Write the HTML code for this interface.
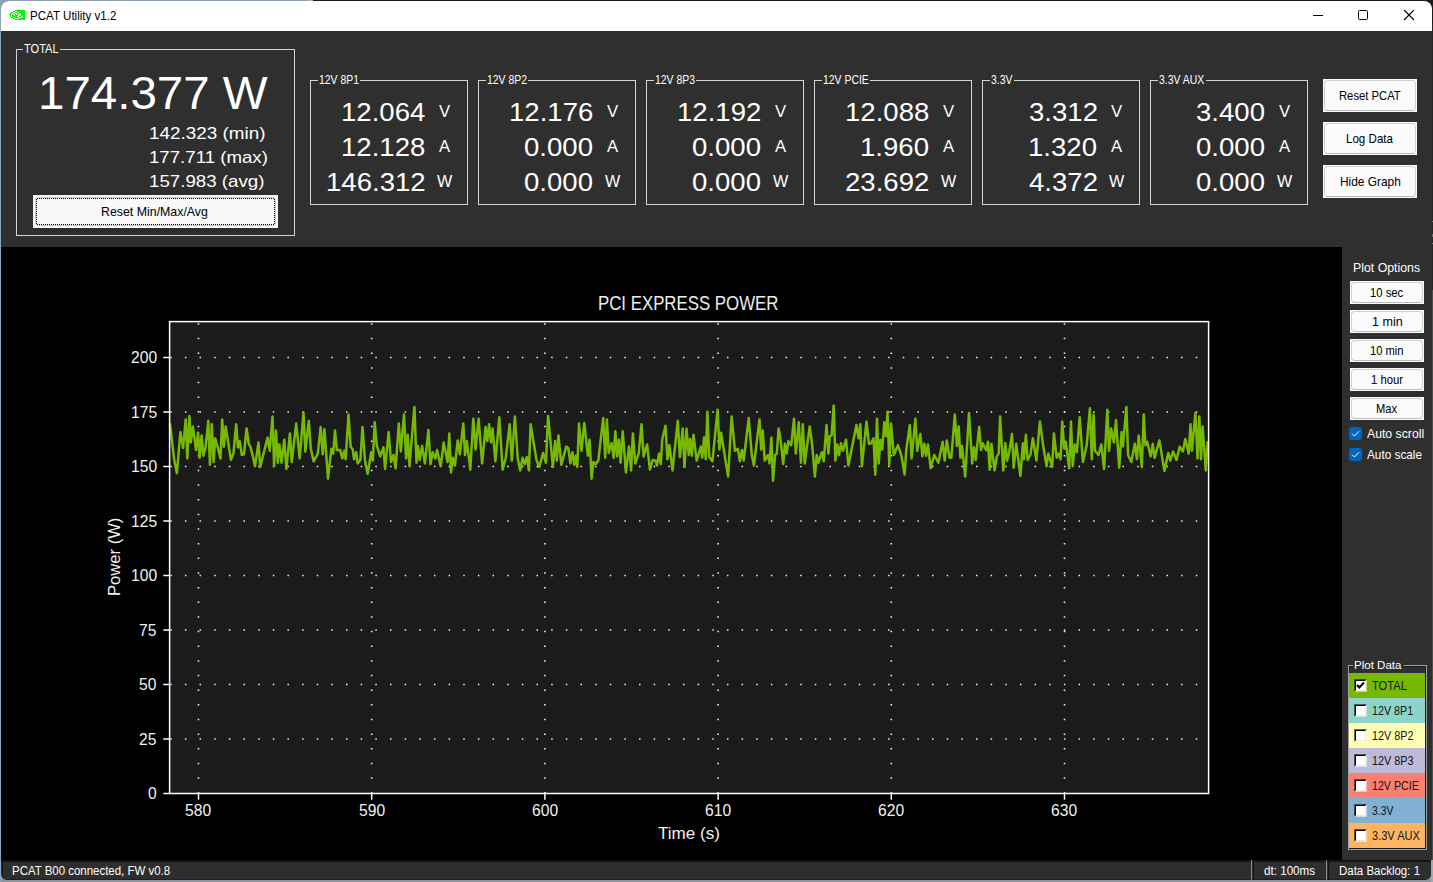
<!DOCTYPE html>
<html><head><meta charset="utf-8"><style>
html,body{margin:0;padding:0;}
body{width:1433px;height:882px;position:relative;overflow:hidden;background:#8da2b8;font-family:'Liberation Sans', sans-serif;}
.t{position:absolute;white-space:pre;transform-origin:0 0;font-family:'Liberation Sans', sans-serif;}
</style></head><body>
<div style="position:absolute;left:0px;top:0px;width:307px;height:1px;background:#8a9db1"></div>
<div style="position:absolute;left:307px;top:0px;width:6px;height:1px;background:#b0b4b8"></div>
<div style="position:absolute;left:313px;top:0px;width:1120px;height:1px;background:#1c1c1c"></div>
<div style="position:absolute;left:1432px;top:0px;width:1px;height:860px;background:#262626"></div>
<div style="position:absolute;left:1412px;top:0px;width:21px;height:24px;background:#1c1c1c"></div>
<div style="position:absolute;left:0px;top:0px;width:1px;height:882px;background:#8fa3b9"></div>
<div style="position:absolute;left:1px;top:1px;width:1431px;height:879px;border-radius:8px;overflow:hidden;background:#2f2f2f">
<div style="position:absolute;left:0;top:0;width:1431px;height:30px;background:#fff"></div>
</div>
<svg style="position:absolute;left:0;top:0" width="30" height="30" viewBox="0 0 30 30" shape-rendering="crispEdges" fill="#00ff00"><rect x="15" y="10" width="10" height="1"/><rect x="13" y="11" width="2" height="1"/><rect x="17" y="11" width="8" height="1"/><rect x="11" y="12" width="2" height="1"/><rect x="15" y="12" width="2" height="1"/><rect x="19" y="12" width="6" height="1"/><rect x="10" y="13" width="2" height="1"/><rect x="13" y="13" width="2" height="1"/><rect x="17" y="13" width="2" height="1"/><rect x="21" y="13" width="4" height="1"/><rect x="9" y="14" width="2" height="1"/><rect x="12" y="14" width="1" height="1"/><rect x="15" y="14" width="1" height="1"/><rect x="18" y="14" width="1" height="1"/><rect x="21" y="14" width="4" height="1"/><rect x="10" y="15" width="1" height="1"/><rect x="12" y="15" width="2" height="1"/><rect x="15" y="15" width="3" height="1"/><rect x="19" y="15" width="1" height="1"/><rect x="21" y="15" width="4" height="1"/><rect x="10" y="16" width="1" height="1"/><rect x="12" y="16" width="5" height="1"/><rect x="19" y="16" width="2" height="1"/><rect x="23" y="16" width="2" height="1"/><rect x="11" y="17" width="2" height="1"/><rect x="15" y="17" width="4" height="1"/><rect x="22" y="17" width="3" height="1"/><rect x="13" y="18" width="2" height="1"/><rect x="19" y="18" width="6" height="1"/><rect x="15" y="19" width="10" height="1"/></svg>
<div class="t" style="left:29.94px;top:9.84px;font-size:12px;line-height:12px;color:#000;transform:scaleX(0.9649);">PCAT Utility v1.2</div>
<div style="position:absolute;left:1313px;top:15px;width:10px;height:1px;background:#000"></div>
<div style="position:absolute;left:1358px;top:10px;width:8px;height:8px;border:1px solid #000;border-radius:1.5px"></div>
<svg style="position:absolute;left:1403px;top:9px" width="12" height="12" viewBox="0 0 12 12"><path d="M1 1L11 11M11 1L1 11" stroke="#000" stroke-width="1.1"/></svg>
<div style="position:absolute;left:16px;top:49px;width:279px;height:187px;border:1px solid #d4d4d4;box-sizing:border-box"></div>
<div style="position:absolute;left:23.0px;top:48px;width:37.0px;height:3px;background:#2f2f2f"></div>
<div class="t" style="left:24.25px;top:42.62px;font-size:12.5px;line-height:12.5px;color:#fff;transform:scaleX(0.8846);">TOTAL</div>
<div class="t" style="left:37.64px;top:69.95px;font-size:46px;line-height:46px;color:#fff;transform:scaleX(1.0322);">174.377 W</div>
<div class="t" style="left:148.98px;top:125.11px;font-size:17px;line-height:17px;color:#fff;transform:scaleX(1.1107);">142.323 (min)</div>
<div class="t" style="left:149.00px;top:149.11px;font-size:17px;line-height:17px;color:#fff;transform:scaleX(1.0972);">177.711 (max)</div>
<div class="t" style="left:149.00px;top:173.11px;font-size:17px;line-height:17px;color:#fff;transform:scaleX(1.1009);">157.983 (avg)</div>
<div style="position:absolute;left:33px;top:195px;width:245px;height:33px;background:#f9f9f9"></div>
<div style="position:absolute;left:35px;top:197px;width:241px;height:29px;border:1px solid #c9c9c9;border-radius:4px;box-sizing:border-box"></div>
<svg style="position:absolute;left:0;top:0" width="300" height="240" shape-rendering="crispEdges"><path d="M37 198.5H274M37 224.5H274M36.5 199V224M274.5 199V224" stroke="#000" stroke-width="1" stroke-dasharray="1 1"/></svg>
<div class="t" style="left:101.48px;top:204.79px;font-size:13px;line-height:13px;color:#000;transform:scaleX(0.9506);">Reset Min/Max/Avg</div>
<div style="position:absolute;left:310px;top:80px;width:158px;height:125px;border:1px solid #d4d4d4;box-sizing:border-box"></div>
<div style="position:absolute;left:318.0px;top:79px;width:41.74921875000001px;height:3px;background:#2f2f2f"></div>
<div class="t" style="left:318.72px;top:73.92px;font-size:12.5px;line-height:12.5px;color:#fff;transform:scaleX(0.8350);">12V 8P1</div>
<div class="t" style="left:340.69px;top:99.49px;font-size:26px;line-height:26px;color:#fff;transform:scaleX(1.0600);">12.064</div>
<div class="t" style="left:341.11px;top:134.49px;font-size:26px;line-height:26px;color:#fff;transform:scaleX(1.0600);">12.128</div>
<div class="t" style="left:326.02px;top:169.49px;font-size:26px;line-height:26px;color:#fff;transform:scaleX(1.0600);">146.312</div>
<div class="t" style="left:438.92px;top:103.11px;font-size:17px;line-height:17px;color:#fff;transform:scaleX(0.9841);">V</div>
<div class="t" style="left:438.96px;top:138.11px;font-size:17px;line-height:17px;color:#fff;transform:scaleX(0.9767);">A</div>
<div class="t" style="left:436.87px;top:173.11px;font-size:17px;line-height:17px;color:#fff;transform:scaleX(0.9500);">W</div>
<div style="position:absolute;left:478px;top:80px;width:158px;height:125px;border:1px solid #d4d4d4;box-sizing:border-box"></div>
<div style="position:absolute;left:486.0px;top:79px;width:41.72312499999998px;height:3px;background:#2f2f2f"></div>
<div class="t" style="left:486.72px;top:73.92px;font-size:12.5px;line-height:12.5px;color:#fff;transform:scaleX(0.8350);">12V 8P2</div>
<div class="t" style="left:509.11px;top:99.49px;font-size:26px;line-height:26px;color:#fff;transform:scaleX(1.0600);">12.176</div>
<div class="t" style="left:524.26px;top:134.49px;font-size:26px;line-height:26px;color:#fff;transform:scaleX(1.0600);">0.000</div>
<div class="t" style="left:524.26px;top:169.49px;font-size:26px;line-height:26px;color:#fff;transform:scaleX(1.0600);">0.000</div>
<div class="t" style="left:606.92px;top:103.11px;font-size:17px;line-height:17px;color:#fff;transform:scaleX(0.9841);">V</div>
<div class="t" style="left:606.96px;top:138.11px;font-size:17px;line-height:17px;color:#fff;transform:scaleX(0.9767);">A</div>
<div class="t" style="left:604.87px;top:173.11px;font-size:17px;line-height:17px;color:#fff;transform:scaleX(0.9500);">W</div>
<div style="position:absolute;left:646px;top:80px;width:158px;height:125px;border:1px solid #d4d4d4;box-sizing:border-box"></div>
<div style="position:absolute;left:654.0px;top:79px;width:41.801406250000014px;height:3px;background:#2f2f2f"></div>
<div class="t" style="left:654.72px;top:73.92px;font-size:12.5px;line-height:12.5px;color:#fff;transform:scaleX(0.8350);">12V 8P3</div>
<div class="t" style="left:677.31px;top:99.49px;font-size:26px;line-height:26px;color:#fff;transform:scaleX(1.0600);">12.192</div>
<div class="t" style="left:692.26px;top:134.49px;font-size:26px;line-height:26px;color:#fff;transform:scaleX(1.0600);">0.000</div>
<div class="t" style="left:692.26px;top:169.49px;font-size:26px;line-height:26px;color:#fff;transform:scaleX(1.0600);">0.000</div>
<div class="t" style="left:774.92px;top:103.11px;font-size:17px;line-height:17px;color:#fff;transform:scaleX(0.9841);">V</div>
<div class="t" style="left:774.96px;top:138.11px;font-size:17px;line-height:17px;color:#fff;transform:scaleX(0.9767);">A</div>
<div class="t" style="left:772.87px;top:173.11px;font-size:17px;line-height:17px;color:#fff;transform:scaleX(0.9500);">W</div>
<div style="position:absolute;left:814px;top:80px;width:158px;height:125px;border:1px solid #d4d4d4;box-sizing:border-box"></div>
<div style="position:absolute;left:822.0px;top:79px;width:47.620312499999955px;height:3px;background:#2f2f2f"></div>
<div class="t" style="left:822.72px;top:73.92px;font-size:12.5px;line-height:12.5px;color:#fff;transform:scaleX(0.8350);">12V PCIE</div>
<div class="t" style="left:845.11px;top:99.49px;font-size:26px;line-height:26px;color:#fff;transform:scaleX(1.0600);">12.088</div>
<div class="t" style="left:860.26px;top:134.49px;font-size:26px;line-height:26px;color:#fff;transform:scaleX(1.0600);">1.960</div>
<div class="t" style="left:845.31px;top:169.49px;font-size:26px;line-height:26px;color:#fff;transform:scaleX(1.0600);">23.692</div>
<div class="t" style="left:942.92px;top:103.11px;font-size:17px;line-height:17px;color:#fff;transform:scaleX(0.9841);">V</div>
<div class="t" style="left:942.96px;top:138.11px;font-size:17px;line-height:17px;color:#fff;transform:scaleX(0.9767);">A</div>
<div class="t" style="left:940.87px;top:173.11px;font-size:17px;line-height:17px;color:#fff;transform:scaleX(0.9500);">W</div>
<div style="position:absolute;left:982px;top:80px;width:158px;height:125px;border:1px solid #d4d4d4;box-sizing:border-box"></div>
<div style="position:absolute;left:990.0px;top:79px;width:24.03156249999995px;height:3px;background:#2f2f2f"></div>
<div class="t" style="left:991.11px;top:73.92px;font-size:12.5px;line-height:12.5px;color:#fff;transform:scaleX(0.8350);">3.3V</div>
<div class="t" style="left:1028.61px;top:99.49px;font-size:26px;line-height:26px;color:#fff;transform:scaleX(1.0600);">3.312</div>
<div class="t" style="left:1028.26px;top:134.49px;font-size:26px;line-height:26px;color:#fff;transform:scaleX(1.0600);">1.320</div>
<div class="t" style="left:1028.61px;top:169.49px;font-size:26px;line-height:26px;color:#fff;transform:scaleX(1.0600);">4.372</div>
<div class="t" style="left:1110.92px;top:103.11px;font-size:17px;line-height:17px;color:#fff;transform:scaleX(0.9841);">V</div>
<div class="t" style="left:1110.96px;top:138.11px;font-size:17px;line-height:17px;color:#fff;transform:scaleX(0.9767);">A</div>
<div class="t" style="left:1108.87px;top:173.11px;font-size:17px;line-height:17px;color:#fff;transform:scaleX(0.9500);">W</div>
<div style="position:absolute;left:1150px;top:80px;width:158px;height:125px;border:1px solid #d4d4d4;box-sizing:border-box"></div>
<div style="position:absolute;left:1158.0px;top:79px;width:47.64640624999993px;height:3px;background:#2f2f2f"></div>
<div class="t" style="left:1159.11px;top:73.92px;font-size:12.5px;line-height:12.5px;color:#fff;transform:scaleX(0.8350);">3.3V AUX</div>
<div class="t" style="left:1196.26px;top:99.49px;font-size:26px;line-height:26px;color:#fff;transform:scaleX(1.0600);">3.400</div>
<div class="t" style="left:1196.26px;top:134.49px;font-size:26px;line-height:26px;color:#fff;transform:scaleX(1.0600);">0.000</div>
<div class="t" style="left:1196.26px;top:169.49px;font-size:26px;line-height:26px;color:#fff;transform:scaleX(1.0600);">0.000</div>
<div class="t" style="left:1278.92px;top:103.11px;font-size:17px;line-height:17px;color:#fff;transform:scaleX(0.9841);">V</div>
<div class="t" style="left:1278.96px;top:138.11px;font-size:17px;line-height:17px;color:#fff;transform:scaleX(0.9767);">A</div>
<div class="t" style="left:1276.87px;top:173.11px;font-size:17px;line-height:17px;color:#fff;transform:scaleX(0.9500);">W</div>
<div style="position:absolute;left:1323px;top:79px;width:94px;height:33px;background:#fbfbfb"></div>
<div style="position:absolute;left:1324px;top:80px;width:92px;height:31px;border:1px solid #d0d0d0;border-bottom-color:#b8b8b8;border-radius:4px;box-sizing:border-box;background:#fbfbfb"></div>
<div class="t" style="left:1338.82px;top:89.49px;font-size:13px;line-height:13px;color:#000;transform:scaleX(0.8654);">Reset PCAT</div>
<div style="position:absolute;left:1323px;top:122px;width:94px;height:33px;background:#fbfbfb"></div>
<div style="position:absolute;left:1324px;top:123px;width:92px;height:31px;border:1px solid #d0d0d0;border-bottom-color:#b8b8b8;border-radius:4px;box-sizing:border-box;background:#fbfbfb"></div>
<div class="t" style="left:1346.05px;top:132.49px;font-size:13px;line-height:13px;color:#000;transform:scaleX(0.8902);">Log Data</div>
<div style="position:absolute;left:1323px;top:165px;width:94px;height:33px;background:#fbfbfb"></div>
<div style="position:absolute;left:1324px;top:166px;width:92px;height:31px;border:1px solid #d0d0d0;border-bottom-color:#b8b8b8;border-radius:4px;box-sizing:border-box;background:#fbfbfb"></div>
<div class="t" style="left:1339.52px;top:175.49px;font-size:13px;line-height:13px;color:#000;transform:scaleX(0.9141);">Hide Graph</div>
<div style="position:absolute;left:1px;top:247px;width:1341px;height:613px;background:#000"></div>
<svg style="position:absolute;left:0;top:0" width="1433" height="882" viewBox="0 0 1433 882"><rect x="169.6" y="321.6" width="1039.0" height="471.9" fill="#1b1b1b"/><path d="M170.25 739.00H1208.6" stroke="#f0f0f0" stroke-width="1.6" stroke-dasharray="1.5 13.15"/><path d="M170.25 684.50H1208.6" stroke="#f0f0f0" stroke-width="1.6" stroke-dasharray="1.5 13.15"/><path d="M170.25 630.00H1208.6" stroke="#f0f0f0" stroke-width="1.6" stroke-dasharray="1.5 13.15"/><path d="M170.25 575.50H1208.6" stroke="#f0f0f0" stroke-width="1.6" stroke-dasharray="1.5 13.15"/><path d="M170.25 521.00H1208.6" stroke="#f0f0f0" stroke-width="1.6" stroke-dasharray="1.5 13.15"/><path d="M170.25 466.50H1208.6" stroke="#f0f0f0" stroke-width="1.6" stroke-dasharray="1.5 13.15"/><path d="M170.25 412.00H1208.6" stroke="#f0f0f0" stroke-width="1.6" stroke-dasharray="1.5 13.15"/><path d="M170.25 357.50H1208.6" stroke="#f0f0f0" stroke-width="1.6" stroke-dasharray="1.5 13.15"/><path d="M198.50 793.5V321.6" stroke="#f0f0f0" stroke-width="1.6" stroke-dasharray="1.5 13.15"/><path d="M371.70 793.5V321.6" stroke="#f0f0f0" stroke-width="1.6" stroke-dasharray="1.5 13.15"/><path d="M544.90 793.5V321.6" stroke="#f0f0f0" stroke-width="1.6" stroke-dasharray="1.5 13.15"/><path d="M718.10 793.5V321.6" stroke="#f0f0f0" stroke-width="1.6" stroke-dasharray="1.5 13.15"/><path d="M891.30 793.5V321.6" stroke="#f0f0f0" stroke-width="1.6" stroke-dasharray="1.5 13.15"/><path d="M1064.50 793.5V321.6" stroke="#f0f0f0" stroke-width="1.6" stroke-dasharray="1.5 13.15"/><path d="M169.9 422.9 L174.1 459.2 L176.9 473.2 L180.4 432.0 L183.1 448.0 L185.7 419.4 L187.3 458.5 L189.4 415.9 L190.8 442.5 L192.9 426.4 L196.0 450.1 L198.1 432.7 L199.6 457.8 L201.6 435.5 L203.4 455.7 L205.5 448.0 L208.3 420.8 L209.9 464.8 L211.8 424.3 L213.6 462.0 L215.2 438.3 L217.3 445.9 L220.5 458.5 L222.2 419.4 L223.9 446.6 L225.7 426.4 L230.9 459.9 L233.4 453.6 L236.2 424.3 L237.9 447.3 L239.7 441.1 L241.8 455.0 L243.9 454.3 L246.6 428.5 L248.7 443.8 L250.4 446.6 L252.9 456.4 L255.0 466.2 L258.5 442.5 L260.2 466.9 L267.6 437.6 L269.7 450.8 L272.5 416.6 L274.1 466.2 L276.0 430.6 L277.8 462.7 L279.4 444.5 L281.5 462.7 L284.3 439.7 L286.4 469.0 L289.9 433.4 L291.7 462.0 L296.2 423.6 L299.7 458.5 L303.5 412.4 L305.3 451.5 L308.8 420.8 L310.8 448.7 L313.6 461.3 L317.8 453.6 L320.6 427.1 L322.7 454.3 L324.4 429.2 L328.0 478.7 L331.4 448.7 L333.2 453.6 L335.0 430.6 L336.9 450.1 L340.2 450.1 L342.3 458.5 L344.3 450.8 L345.7 459.2 L348.5 414.5 L350.6 446.6 L352.7 449.4 L354.1 459.2 L356.2 452.2 L357.6 463.4 L360.4 459.9 L362.5 427.1 L364.9 459.9 L367.7 473.9 L371.2 452.2 L372.8 460.6 L374.7 422.2 L376.7 445.2 L380.2 456.4 L383.4 447.3 L385.1 469.0 L388.6 432.0 L391.0 462.0 L393.5 455.0 L395.6 468.3 L398.8 423.6 L400.8 451.5 L404.0 414.5 L406.1 458.5 L407.7 434.8 L409.5 466.2 L414.4 406.9 L416.5 462.7 L417.9 445.9 L419.7 459.9 L422.1 445.9 L424.9 463.4 L428.4 429.9 L430.5 464.1 L432.6 452.2 L435.4 458.5 L437.0 450.1 L440.7 466.2 L443.7 442.5 L447.6 462.0 L449.3 433.4 L451.0 472.5 L452.8 457.8 L454.9 465.5 L457.7 440.4 L459.8 454.3 L463.3 423.6 L465.0 455.0 L466.8 441.1 L470.3 469.7 L473.3 418.7 L475.6 449.4 L478.6 418.7 L482.1 463.4 L485.6 427.1 L487.3 441.1 L489.1 424.3 L490.9 442.5 L492.6 428.5 L495.4 461.3 L499.3 417.3 L502.6 469.7 L505.8 457.8 L509.6 424.3 L511.8 460.6 L514.9 416.6 L517.7 458.5 L520.2 470.4 L522.6 457.8 L524.7 464.1 L526.8 457.1 L528.9 470.4 L530.6 424.3 L536.6 460.6 L539.3 466.9 L543.1 452.9 L545.9 462.7 L548.1 415.9 L552.9 466.9 L555.1 441.1 L556.8 460.6 L558.5 435.5 L561.3 464.8 L566.2 446.6 L568.3 448.0 L570.4 463.4 L572.4 452.2 L574.3 464.8 L575.9 455.7 L577.3 466.9 L579.0 423.6 L581.5 450.8 L584.3 422.9 L587.8 455.7 L589.6 439.7 L591.6 478.7 L593.4 462.0 L595.5 464.1 L598.3 460.6 L603.2 418.0 L605.2 457.8 L606.9 419.4 L608.7 452.9 L611.5 443.2 L613.6 457.8 L615.3 431.3 L617.1 456.4 L618.9 439.7 L620.6 462.7 L622.7 431.3 L625.9 472.5 L629.0 446.6 L631.1 470.4 L632.9 433.4 L635.3 463.4 L638.7 453.6 L641.5 424.3 L643.6 456.4 L647.1 444.5 L649.9 469.7 L652.7 459.9 L655.5 460.6 L656.9 465.5 L659.0 453.6 L660.8 464.1 L662.2 439.7 L665.5 425.7 L667.4 459.2 L669.4 445.2 L672.5 470.4 L677.8 420.8 L679.9 457.1 L682.7 428.5 L684.5 466.9 L686.5 428.5 L688.7 455.0 L690.1 439.0 L691.8 455.7 L693.5 434.8 L696.7 460.6 L700.8 446.6 L702.2 457.8 L704.1 437.6 L705.7 459.2 L707.4 411.7 L709.2 457.1 L712.4 461.3 L717.6 409.7 L719.4 449.4 L721.1 432.7 L728.1 476.6 L731.6 416.6 L735.0 450.8 L737.8 448.7 L739.9 461.3 L742.0 450.1 L743.7 460.6 L748.7 418.0 L751.8 455.0 L753.9 465.5 L759.5 419.4 L761.2 449.4 L762.8 430.6 L764.7 460.6 L768.1 455.0 L769.5 463.4 L771.4 437.6 L773.0 480.8 L775.1 455.0 L776.8 453.6 L778.6 428.5 L780.7 440.4 L783.2 464.1 L784.9 443.8 L786.6 453.6 L788.4 441.1 L791.2 445.2 L794.0 418.7 L795.8 453.6 L798.8 422.2 L800.9 462.7 L802.8 424.3 L804.7 463.4 L809.7 426.4 L812.1 444.5 L814.9 476.6 L816.7 455.0 L818.4 462.7 L821.9 452.2 L823.7 461.3 L826.5 425.0 L828.4 453.6 L829.8 436.2 L831.6 435.5 L833.7 405.5 L835.4 460.6 L837.2 444.5 L839.0 455.0 L841.0 443.2 L842.8 450.8 L846.0 439.7 L848.4 465.5 L856.4 425.0 L858.6 438.3 L860.3 424.3 L861.9 466.2 L866.5 421.5 L868.9 443.8 L871.1 443.2 L873.5 438.3 L875.3 474.6 L877.0 418.7 L878.7 463.4 L880.5 439.7 L882.3 449.4 L884.3 422.2 L886.1 436.2 L887.5 411.7 L889.3 464.8 L891.0 423.6 L893.8 455.0 L897.9 445.2 L901.4 455.7 L904.6 474.6 L906.3 449.4 L909.8 425.0 L911.6 458.5 L915.4 418.7 L917.2 450.8 L920.3 434.1 L922.4 456.4 L924.2 443.8 L926.1 455.7 L927.9 444.5 L930.7 468.3 L934.2 455.0 L938.4 462.7 L942.6 441.8 L944.7 460.6 L946.8 440.4 L949.6 457.8 L951.3 457.8 L954.8 414.5 L956.9 445.9 L958.7 426.4 L960.4 457.8 L962.0 445.9 L965.2 476.6 L969.0 413.1 L972.2 463.4 L974.0 447.3 L975.7 459.9 L979.2 427.1 L981.0 450.1 L982.7 443.2 L986.2 450.1 L988.0 441.8 L989.7 469.7 L991.5 443.8 L994.5 470.4 L996.9 456.4 L998.7 453.6 L1000.1 416.6 L1003.3 470.4 L1005.3 443.2 L1007.1 460.6 L1009.2 452.2 L1012.0 434.1 L1013.7 467.6 L1016.2 443.8 L1020.4 475.9 L1022.9 443.2 L1023.9 459.2 L1025.9 434.8 L1027.6 459.9 L1030.4 455.0 L1032.9 438.3 L1036.4 460.6 L1039.9 421.5 L1043.4 447.3 L1046.6 466.2 L1048.3 453.6 L1052.2 466.9 L1053.9 433.4 L1056.7 457.8 L1058.7 453.6 L1060.6 459.2 L1062.2 421.5 L1064.3 448.7 L1065.7 441.8 L1069.2 468.3 L1071.0 421.5 L1072.7 466.2 L1074.8 444.5 L1076.9 452.2 L1079.7 417.3 L1082.9 462.0 L1086.7 445.2 L1089.9 408.3 L1091.8 459.2 L1093.6 414.5 L1095.0 450.8 L1098.5 455.0 L1101.3 444.5 L1104.1 469.0 L1107.3 409.7 L1109.0 450.8 L1111.1 428.5 L1113.9 442.5 L1116.0 420.1 L1119.2 467.6 L1121.6 432.0 L1122.9 446.6 L1126.4 406.9 L1128.1 455.0 L1131.3 462.0 L1134.8 443.8 L1136.9 459.2 L1138.7 435.5 L1141.8 466.9 L1143.7 414.5 L1145.4 445.2 L1147.2 441.8 L1150.7 456.4 L1152.8 443.8 L1154.6 457.8 L1156.3 451.5 L1159.4 440.4 L1164.4 471.1 L1168.2 452.9 L1170.3 460.6 L1173.0 451.5 L1176.5 459.9 L1179.7 446.6 L1182.8 451.5 L1185.3 439.0 L1188.7 453.6 L1190.5 424.3 L1191.9 450.8 L1195.4 413.1 L1197.5 458.5 L1199.3 416.6 L1201.0 459.2 L1202.6 426.4 L1205.8 470.4 L1207.7 441.1" stroke="#76b900" stroke-width="2.5" fill="none" stroke-linejoin="round"/><rect x="169.6" y="321.6" width="1039.0" height="471.9" fill="none" stroke="#fff" stroke-width="1.5"/><path d="M163.3 793.50H169.6" stroke="#fff" stroke-width="1.5"/><path d="M163.3 739.00H169.6" stroke="#fff" stroke-width="1.5"/><path d="M163.3 684.50H169.6" stroke="#fff" stroke-width="1.5"/><path d="M163.3 630.00H169.6" stroke="#fff" stroke-width="1.5"/><path d="M163.3 575.50H169.6" stroke="#fff" stroke-width="1.5"/><path d="M163.3 521.00H169.6" stroke="#fff" stroke-width="1.5"/><path d="M163.3 466.50H169.6" stroke="#fff" stroke-width="1.5"/><path d="M163.3 412.00H169.6" stroke="#fff" stroke-width="1.5"/><path d="M163.3 357.50H169.6" stroke="#fff" stroke-width="1.5"/><path d="M198.50 793.5V799.7" stroke="#fff" stroke-width="1.5"/><path d="M371.70 793.5V799.7" stroke="#fff" stroke-width="1.5"/><path d="M544.90 793.5V799.7" stroke="#fff" stroke-width="1.5"/><path d="M718.10 793.5V799.7" stroke="#fff" stroke-width="1.5"/><path d="M891.30 793.5V799.7" stroke="#fff" stroke-width="1.5"/><path d="M1064.50 793.5V799.7" stroke="#fff" stroke-width="1.5"/></svg>
<div class="t" style="left:148.10px;top:785.20px;font-size:16.3px;line-height:16.3px;color:#f0f0f0;transform:scaleX(0.9600);">0</div>
<div class="t" style="left:139.46px;top:730.70px;font-size:16.3px;line-height:16.3px;color:#f0f0f0;transform:scaleX(0.9600);">25</div>
<div class="t" style="left:139.42px;top:676.20px;font-size:16.3px;line-height:16.3px;color:#f0f0f0;transform:scaleX(0.9600);">50</div>
<div class="t" style="left:139.46px;top:621.70px;font-size:16.3px;line-height:16.3px;color:#f0f0f0;transform:scaleX(0.9600);">75</div>
<div class="t" style="left:130.69px;top:567.20px;font-size:16.3px;line-height:16.3px;color:#f0f0f0;transform:scaleX(0.9600);">100</div>
<div class="t" style="left:130.73px;top:512.70px;font-size:16.3px;line-height:16.3px;color:#f0f0f0;transform:scaleX(0.9600);">125</div>
<div class="t" style="left:130.69px;top:458.20px;font-size:16.3px;line-height:16.3px;color:#f0f0f0;transform:scaleX(0.9600);">150</div>
<div class="t" style="left:130.73px;top:403.70px;font-size:16.3px;line-height:16.3px;color:#f0f0f0;transform:scaleX(0.9600);">175</div>
<div class="t" style="left:130.69px;top:349.20px;font-size:16.3px;line-height:16.3px;color:#f0f0f0;transform:scaleX(0.9600);">200</div>
<div class="t" style="left:185.43px;top:802.20px;font-size:16.3px;line-height:16.3px;color:#f0f0f0;transform:scaleX(0.9600);">580</div>
<div class="t" style="left:358.63px;top:802.20px;font-size:16.3px;line-height:16.3px;color:#f0f0f0;transform:scaleX(0.9600);">590</div>
<div class="t" style="left:531.76px;top:802.20px;font-size:16.3px;line-height:16.3px;color:#f0f0f0;transform:scaleX(0.9600);">600</div>
<div class="t" style="left:704.96px;top:802.20px;font-size:16.3px;line-height:16.3px;color:#f0f0f0;transform:scaleX(0.9600);">610</div>
<div class="t" style="left:878.16px;top:802.20px;font-size:16.3px;line-height:16.3px;color:#f0f0f0;transform:scaleX(0.9600);">620</div>
<div class="t" style="left:1051.36px;top:802.20px;font-size:16.3px;line-height:16.3px;color:#f0f0f0;transform:scaleX(0.9600);">630</div>
<div class="t" style="left:598.21px;top:292.32px;font-size:21px;line-height:21px;color:#ececec;transform:scaleX(0.8009);">PCI EXPRESS POWER</div>
<div class="t" style="left:657.72px;top:824.91px;font-size:17px;line-height:17px;color:#f0f0f0;transform:scaleX(1.0029);">Time (s)</div>
<div style="position:absolute;left:119.9px;top:595.2px;width:0;height:0;transform:rotate(-90deg);transform-origin:0 0"><div class="t" style="left:-1.37px;top:-14.39px;font-size:17px;line-height:17px;color:#f0f0f0;transform:scaleX(0.9766)">Power (W)</div></div>
<div style="position:absolute;left:1342px;top:247px;width:90px;height:613px;background:#2f2f2f"></div>
<div class="t" style="left:1353.28px;top:261.56px;font-size:12.8px;line-height:12.8px;color:#fff;transform:scaleX(0.9630);">Plot Options</div>
<div style="position:absolute;left:1350px;top:281px;width:74px;height:23px;background:#fbfbfb"></div>
<div style="position:absolute;left:1351px;top:282px;width:72px;height:21px;border:1px solid #d0d0d0;border-bottom-color:#bdbdbd;border-radius:4px;box-sizing:border-box"></div>
<div class="t" style="left:1370.16px;top:286.66px;font-size:12.8px;line-height:12.8px;color:#000;transform:scaleX(0.8787);">10 sec</div>
<div style="position:absolute;left:1350px;top:310px;width:74px;height:23px;background:#fbfbfb"></div>
<div style="position:absolute;left:1351px;top:311px;width:72px;height:21px;border:1px solid #d0d0d0;border-bottom-color:#bdbdbd;border-radius:4px;box-sizing:border-box"></div>
<div class="t" style="left:1371.56px;top:315.66px;font-size:12.8px;line-height:12.8px;color:#000;transform:scaleX(0.9829);">1 min</div>
<div style="position:absolute;left:1350px;top:339px;width:74px;height:23px;background:#fbfbfb"></div>
<div style="position:absolute;left:1351px;top:340px;width:72px;height:21px;border:1px solid #d0d0d0;border-bottom-color:#bdbdbd;border-radius:4px;box-sizing:border-box"></div>
<div class="t" style="left:1370.16px;top:344.66px;font-size:12.8px;line-height:12.8px;color:#000;transform:scaleX(0.8741);">10 min</div>
<div style="position:absolute;left:1350px;top:368px;width:74px;height:23px;background:#fbfbfb"></div>
<div style="position:absolute;left:1351px;top:369px;width:72px;height:21px;border:1px solid #d0d0d0;border-bottom-color:#bdbdbd;border-radius:4px;box-sizing:border-box"></div>
<div class="t" style="left:1370.65px;top:373.66px;font-size:12.8px;line-height:12.8px;color:#000;transform:scaleX(0.8823);">1 hour</div>
<div style="position:absolute;left:1350px;top:397px;width:74px;height:23px;background:#fbfbfb"></div>
<div style="position:absolute;left:1351px;top:398px;width:72px;height:21px;border:1px solid #d0d0d0;border-bottom-color:#bdbdbd;border-radius:4px;box-sizing:border-box"></div>
<div class="t" style="left:1376.08px;top:402.66px;font-size:12.8px;line-height:12.8px;color:#000;transform:scaleX(0.8705);">Max</div>
<div style="position:absolute;left:1349px;top:427px;width:13px;height:13px;background:#0067c0;border-radius:3px"></div>
<svg style="position:absolute;left:1349px;top:427px" width="13" height="13" viewBox="0 0 13 13"><path d="M3.2 6.8L5.4 9L10 4.3" stroke="#fff" stroke-width="1" fill="none"/></svg>
<div class="t" style="left:1367.17px;top:427.56px;font-size:12.8px;line-height:12.8px;color:#fff;transform:scaleX(0.9562);">Auto scroll</div>
<div style="position:absolute;left:1349px;top:448px;width:13px;height:13px;background:#0067c0;border-radius:3px"></div>
<svg style="position:absolute;left:1349px;top:448px" width="13" height="13" viewBox="0 0 13 13"><path d="M3.2 6.8L5.4 9L10 4.3" stroke="#fff" stroke-width="1" fill="none"/></svg>
<div class="t" style="left:1367.17px;top:448.56px;font-size:12.8px;line-height:12.8px;color:#fff;transform:scaleX(0.9211);">Auto scale</div>
<div style="position:absolute;left:1348px;top:665px;width:79px;height:185px;border:1px solid #a0a0a0;box-sizing:border-box"></div>
<div style="position:absolute;left:1349px;top:666px;width:77px;height:183px;border:1px solid #1a1a1a;border-top-color:#1a1a1a;box-sizing:border-box"></div>
<div style="position:absolute;left:1352.5px;top:663px;width:51px;height:4px;background:#2f2f2f"></div>
<div class="t" style="left:1354.25px;top:659.71px;font-size:11.8px;line-height:11.8px;color:#fff;transform:scaleX(0.9778);">Plot Data</div>
<div style="position:absolute;left:1349px;top:673px;width:76px;height:25px;background:#76b900"></div>
<div style="position:absolute;left:1354px;top:679px;width:13px;height:13px;border-top:1px solid rgba(0,0,0,0.55);border-left:1px solid rgba(0,0,0,0.55);border-right:1px solid rgba(255,255,255,0.55);border-bottom:1px solid rgba(255,255,255,0.55);box-sizing:border-box"></div>
<div style="position:absolute;left:1355px;top:680px;width:11px;height:11px;background:#fff;border-top:1px solid #000;border-left:1px solid #000;border-right:1px solid #e6e6e6;border-bottom:1px solid #e6e6e6;box-sizing:border-box"></div>
<svg style="position:absolute;left:1354px;top:679px" width="13" height="13" viewBox="0 0 13 13"><path d="M3 6L5.3 8.5L10 3.5" stroke="#000" stroke-width="2" fill="none"/></svg>
<div class="t" style="left:1372.15px;top:679.66px;font-size:12.8px;line-height:12.8px;color:#141414;transform:scaleX(0.8714);">TOTAL</div>
<div style="position:absolute;left:1349px;top:698px;width:76px;height:25px;background:#8dd3c7"></div>
<div style="position:absolute;left:1354px;top:704px;width:13px;height:13px;border-top:1px solid rgba(0,0,0,0.55);border-left:1px solid rgba(0,0,0,0.55);border-right:1px solid rgba(255,255,255,0.55);border-bottom:1px solid rgba(255,255,255,0.55);box-sizing:border-box"></div>
<div style="position:absolute;left:1355px;top:705px;width:11px;height:11px;background:#fff;border-top:1px solid #000;border-left:1px solid #000;border-right:1px solid #e6e6e6;border-bottom:1px solid #e6e6e6;box-sizing:border-box"></div>
<div class="t" style="left:1371.59px;top:704.66px;font-size:12.8px;line-height:12.8px;color:#141414;transform:scaleX(0.8396);">12V 8P1</div>
<div style="position:absolute;left:1349px;top:723px;width:76px;height:25px;background:#ffffb3"></div>
<div style="position:absolute;left:1354px;top:729px;width:13px;height:13px;border-top:1px solid rgba(0,0,0,0.55);border-left:1px solid rgba(0,0,0,0.55);border-right:1px solid rgba(255,255,255,0.55);border-bottom:1px solid rgba(255,255,255,0.55);box-sizing:border-box"></div>
<div style="position:absolute;left:1355px;top:730px;width:11px;height:11px;background:#fff;border-top:1px solid #000;border-left:1px solid #000;border-right:1px solid #e6e6e6;border-bottom:1px solid #e6e6e6;box-sizing:border-box"></div>
<div class="t" style="left:1371.59px;top:729.66px;font-size:12.8px;line-height:12.8px;color:#141414;transform:scaleX(0.8444);">12V 8P2</div>
<div style="position:absolute;left:1349px;top:748px;width:76px;height:25px;background:#bebada"></div>
<div style="position:absolute;left:1354px;top:754px;width:13px;height:13px;border-top:1px solid rgba(0,0,0,0.55);border-left:1px solid rgba(0,0,0,0.55);border-right:1px solid rgba(255,255,255,0.55);border-bottom:1px solid rgba(255,255,255,0.55);box-sizing:border-box"></div>
<div style="position:absolute;left:1355px;top:755px;width:11px;height:11px;background:#fff;border-top:1px solid #000;border-left:1px solid #000;border-right:1px solid #e6e6e6;border-bottom:1px solid #e6e6e6;box-sizing:border-box"></div>
<div class="t" style="left:1371.59px;top:754.66px;font-size:12.8px;line-height:12.8px;color:#141414;transform:scaleX(0.8448);">12V 8P3</div>
<div style="position:absolute;left:1349px;top:773px;width:76px;height:25px;background:#fb8072"></div>
<div style="position:absolute;left:1354px;top:779px;width:13px;height:13px;border-top:1px solid rgba(0,0,0,0.55);border-left:1px solid rgba(0,0,0,0.55);border-right:1px solid rgba(255,255,255,0.55);border-bottom:1px solid rgba(255,255,255,0.55);box-sizing:border-box"></div>
<div style="position:absolute;left:1355px;top:780px;width:11px;height:11px;background:#fff;border-top:1px solid #000;border-left:1px solid #000;border-right:1px solid #e6e6e6;border-bottom:1px solid #e6e6e6;box-sizing:border-box"></div>
<div class="t" style="left:1371.60px;top:779.66px;font-size:12.8px;line-height:12.8px;color:#141414;transform:scaleX(0.8315);">12V PCIE</div>
<div style="position:absolute;left:1349px;top:798px;width:76px;height:25px;background:#80b1d3"></div>
<div style="position:absolute;left:1354px;top:804px;width:13px;height:13px;border-top:1px solid rgba(0,0,0,0.55);border-left:1px solid rgba(0,0,0,0.55);border-right:1px solid rgba(255,255,255,0.55);border-bottom:1px solid rgba(255,255,255,0.55);box-sizing:border-box"></div>
<div style="position:absolute;left:1355px;top:805px;width:11px;height:11px;background:#fff;border-top:1px solid #000;border-left:1px solid #000;border-right:1px solid #e6e6e6;border-bottom:1px solid #e6e6e6;box-sizing:border-box"></div>
<div class="t" style="left:1372.01px;top:804.66px;font-size:12.8px;line-height:12.8px;color:#141414;transform:scaleX(0.8103);">3.3V</div>
<div style="position:absolute;left:1349px;top:823px;width:76px;height:25px;background:#fdb462"></div>
<div style="position:absolute;left:1354px;top:829px;width:13px;height:13px;border-top:1px solid rgba(0,0,0,0.55);border-left:1px solid rgba(0,0,0,0.55);border-right:1px solid rgba(255,255,255,0.55);border-bottom:1px solid rgba(255,255,255,0.55);box-sizing:border-box"></div>
<div style="position:absolute;left:1355px;top:830px;width:11px;height:11px;background:#fff;border-top:1px solid #000;border-left:1px solid #000;border-right:1px solid #e6e6e6;border-bottom:1px solid #e6e6e6;box-sizing:border-box"></div>
<div class="t" style="left:1371.99px;top:829.66px;font-size:12.8px;line-height:12.8px;color:#141414;transform:scaleX(0.8621);">3.3V AUX</div>
<div style="position:absolute;left:0px;top:879px;width:1433px;height:3px;background:#8e949a"></div>
<div style="position:absolute;left:1431px;top:860px;width:2px;height:22px;background:#a2a8ae"></div>
<div style="position:absolute;left:0px;top:860px;width:1px;height:22px;background:#8fa3b9"></div>
<div style="position:absolute;left:1px;top:800px;width:1430px;height:80px;border-radius:0 0 6px 6px;overflow:hidden">
<div style="position:absolute;left:0;top:60px;width:1430px;height:19px;background:#2e2e2e"></div>
<div style="position:absolute;left:0;top:79px;width:1430px;height:1px;background:#202020"></div>
</div>
<div class="t" style="left:12.35px;top:864.84px;font-size:12px;line-height:12px;color:#fff;transform:scaleX(0.9547);">PCAT B00 connected, FW v0.8</div>
<div style="position:absolute;left:1px;top:860px;width:1430px;height:2px;background:#151515"></div>
<div style="position:absolute;left:1251px;top:860px;width:1px;height:20px;background:#8a8a8a"></div>
<div style="position:absolute;left:1326px;top:860px;width:1px;height:20px;background:#8a8a8a"></div>
<div style="position:absolute;left:1253px;top:861px;width:1px;height:18px;background:#111"></div>
<div style="position:absolute;left:1328px;top:861px;width:1px;height:18px;background:#111"></div>
<div style="position:absolute;left:2px;top:861px;width:1px;height:16px;background:#111"></div>
<div class="t" style="left:1263.91px;top:864.84px;font-size:12px;line-height:12px;color:#fff;transform:scaleX(0.9695);">dt: 100ms</div>
<div class="t" style="left:1338.85px;top:864.84px;font-size:12px;line-height:12px;color:#fff;transform:scaleX(0.9563);">Data Backlog: 1</div>
<div style="position:absolute;left:1432px;top:221px;width:1px;height:1px;background:#777"></div>
<div style="position:absolute;left:1432px;top:234px;width:1px;height:3px;background:#666"></div>
<div style="position:absolute;left:1432px;top:243px;width:1px;height:1px;background:#777"></div>
<div style="position:absolute;left:1432px;top:290px;width:1px;height:570px;background:#4c4c4c"></div>
</body></html>
